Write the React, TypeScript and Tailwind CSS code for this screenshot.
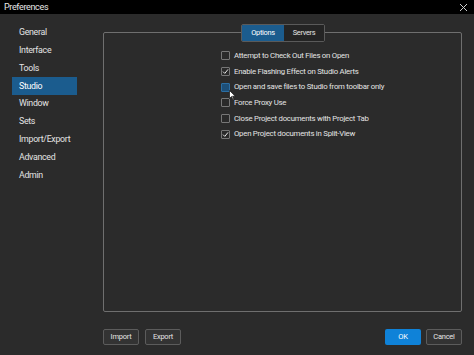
import React from "react";

const items = ["General", "Interface", "Tools", "Studio", "Window", "Sets", "Import/Export", "Advanced", "Admin"];
const opts: { label: string; checked: boolean; hover?: boolean }[] = [
  { label: "Attempt to Check Out Files on Open", checked: false },
  { label: "Enable Flashing Effect on Studio Alerts", checked: true },
  { label: "Open and save files to Studio from toolbar only", checked: false, hover: true },
  { label: "Force Proxy Use", checked: false },
  { label: "Close Project documents with Project Tab", checked: false },
  { label: "Open Project documents in Split-View", checked: true },
];

function Box({ checked, hover }: { checked: boolean; hover?: boolean }) {
  return (
    <div
      className={
        "w-[9px] h-[9px] rounded-[1px] border flex items-center justify-center shrink-0 " +
        (hover ? "border-[#2b6ea3] bg-[#1d4f78]" : "border-[#777] bg-[#2a2a2a]")
      }
    >
      {checked && (
        <svg width="7" height="7" viewBox="0 0 7 7">
          <path d="M1 3.6 L2.8 5.4 L6 1.4" stroke="#e6e6e6" strokeWidth="1" fill="none" />
        </svg>
      )}
    </div>
  );
}

export default function App() {
  return (
    <div
      className="w-[474px] h-[355px] bg-[#2b2b2b] flex flex-col text-[#e4e4e4] overflow-hidden relative"
      style={{ fontFamily: "Roboto, 'Liberation Sans', sans-serif" }}
    >
      <div className="h-[14px] bg-black flex items-center justify-between px-[4px]">
        <span className="text-[9px] tracking-[-0.35px] leading-none text-[#e8e8e8]">Preferences</span>
        <svg width="9" height="9" viewBox="0 0 9 9" className="mr-[2px]">
          <path d="M1 1 L8 8 M8 1 L1 8" stroke="#cfcfcf" strokeWidth="1" />
        </svg>
      </div>
      <div className="flex flex-1">
        <div className="w-[103px] pt-[10px] pl-[12px] flex flex-col">
          {items.map((it) => (
            <div
              key={it}
              className={
                "w-[65px] h-[17.8px] flex items-center pl-[7px] text-[8.8px] tracking-[-0.3px] " +
                (it === "Studio" ? "bg-[#1b5c8e] text-white" : "text-[#e4e4e4]")
              }
            >
              {it}
            </div>
          ))}
        </div>
        <div className="flex-1 flex flex-col pr-[12px]">
          <div className="mt-[18px] h-[280px] border border-[#6f6f6f] rounded-[2px] relative">
            <div className="absolute left-[137px] top-[-9px] flex h-[18px] border border-[#5a5a5a] rounded-[2px] bg-[#2b2b2b] text-[7.4px] tracking-[-0.3px]">
              <div className="w-[42px] bg-[#1b5c8e] flex items-center justify-center text-white rounded-l-[1px]">Options</div>
              <div className="w-[40px] flex items-center justify-center bg-[#242424] text-[#e4e4e4]">Servers</div>
            </div>
            <div className="pl-[117px] pt-[15px] flex flex-col">
              {opts.map((o) => (
                <div key={o.label} className="h-[15.7px] flex items-center gap-[4px] text-[7.8px] tracking-[-0.25px]">
                  <Box checked={o.checked} hover={o.hover} />
                  <span>{o.label}</span>
                </div>
              ))}
            </div>
          </div>
          <div className="flex items-center justify-between mt-[17px]">
            <div className="flex gap-[6px]">
              <button className="w-[36px] h-[16px] border border-[#5c5c5c] rounded-[2px] bg-[#333] text-[7.5px] tracking-[-0.25px] text-[#e4e4e4]">Import</button>
              <button className="w-[36px] h-[16px] border border-[#5c5c5c] rounded-[2px] bg-[#333] text-[7.5px] tracking-[-0.25px] text-[#e4e4e4]">Export</button>
            </div>
            <div className="flex gap-[5px]">
              <button className="w-[36px] h-[16px] rounded-[2px] bg-[#0f82d8] text-[7.5px] tracking-[-0.25px] text-white">OK</button>
              <button className="w-[36px] h-[16px] border border-[#5c5c5c] rounded-[2px] bg-[#333] text-[7.5px] tracking-[-0.25px] text-[#e4e4e4]">Cancel</button>
            </div>
          </div>
        </div>
      </div>
      <svg className="absolute left-[229px] top-[90px]" width="7" height="11" viewBox="0 0 7 11">
        <path d="M0.5 0.5 L0.5 8.5 L2.5 6.5 L4 10 L5 9.5 L3.6 6.2 L6.3 6.2 Z" fill="#fff" stroke="#111" strokeWidth="0.7" />
      </svg>
    </div>
  );
}
